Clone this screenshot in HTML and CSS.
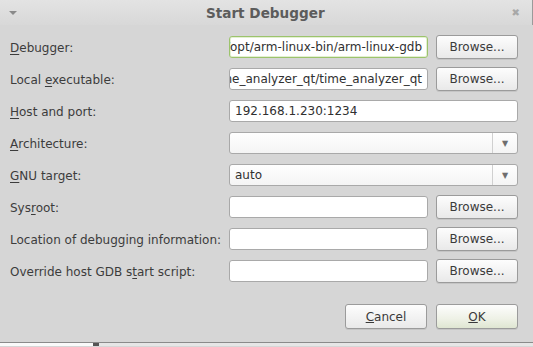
FILE: index.html
```html
<!DOCTYPE html>
<html lang="en">
<head>
    <meta charset="UTF-8">
    <title>Start Debugger</title>
    <link rel="stylesheet" href="styles.css">
</head>
<body>
    <div class="window">
        <div class="titlebar">
            <span class="menu-arrow"></span>
            <span class="title">Start Debugger</span>
            <span class="close">&#x2716;</span>
        </div>

        <div class="content">
            <div class="form">
                <label class="label"><u>D</u>ebugger:</label>
                <div class="field focused"><span class="scroll">/opt/arm-linux-bin/arm-linux-gdb</span></div>
                <button class="btn">Browse...</button>

                <label class="label">Local <u>e</u>xecutable:</label>
                <div class="field"><span class="scroll">/home/user/time_analyzer_qt/time_analyzer_qt</span></div>
                <button class="btn">Browse...</button>

                <label class="label"><u>H</u>ost and port:</label>
                <div class="field wide">192.168.1.230:1234</div>

                <label class="label"><u>A</u>rchitecture:</label>
                <div class="combo wide"><span class="combo-text"></span><span class="combo-arrow">&#x25BC;</span></div>

                <label class="label"><u>G</u>NU target:</label>
                <div class="combo wide"><span class="combo-text">auto</span><span class="combo-arrow">&#x25BC;</span></div>

                <label class="label">Sys<u>r</u>oot:</label>
                <div class="field"></div>
                <button class="btn">Browse...</button>

                <label class="label">Location of debugging information:</label>
                <div class="field"></div>
                <button class="btn">Browse...</button>

                <label class="label">Override host GDB s<u>t</u>art script:</label>
                <div class="field"></div>
                <button class="btn">Browse...</button>
            </div>

            <div class="buttons">
                <button class="btn"><u>C</u>ancel</button>
                <button class="btn default"><u>O</u>K</button>
            </div>
        </div>
    </div>
    <div class="under">
        <span class="under-white"></span>
        <span class="under-dark"></span>
    </div>
</body>
</html>
```

FILE: styles.css
```css
body {
    margin: 0;
    width: 533px;
    height: 347px;
    overflow: hidden;
    background-color: #d6d6d6;
    font-family: "DejaVu Sans", sans-serif;
    font-size: 12px;
    color: #3c3c3c;
}

.window {
    height: 343px;
    border-bottom: 1px solid #8a8a8a;
    box-sizing: border-box;
    background-color: #d6d6d6;
}

.titlebar {
    height: 25px;
    display: flex;
    align-items: center;
    justify-content: space-between;
    padding: 0 12px 0 9px;
    background: linear-gradient(#e3e3e3, #d8d8d8);
    border-right: 1px solid #9a9a9a;
}

.menu-arrow {
    width: 0;
    height: 0;
    border-left: 4px solid transparent;
    border-right: 4px solid transparent;
    border-top: 4px solid #8a8a8a;
    margin-top: 1px;
}

.title {
    font-weight: bold;
    font-size: 13.6px;
    color: #5c5c5c;
    margin-left: 2px;
}

.close {
    font-size: 10px;
    color: #a8a8a8;
}

.content {
    padding: 10px 15px 0 10px;
}

.form {
    display: grid;
    grid-template-columns: 211px 199px 82px;
    grid-auto-rows: 24px;
    column-gap: 8px;
    row-gap: 8px;
    align-items: center;
}

.label {
    white-space: nowrap;
    padding-top: 1px;
}

.label u {
    text-underline-offset: 2px;
}

.field,
.combo {
    height: 22px;
    box-sizing: border-box;
    background-color: #fff;
    border: 1px solid #a9a9a9;
    border-radius: 3px;
    padding: 0 5px;
    display: flex;
    align-items: center;
    white-space: nowrap;
    overflow: hidden;
    color: #303030;
    font-size: 12px;
}

.field.focused {
    border-color: #9cc36c;
    box-shadow: inset 0 0 0 1px #e3f0d2;
}

.field .scroll {
    display: flex;
    justify-content: flex-end;
    width: 100%;
    margin-right: -2px;
}

.wide {
    grid-column: span 2;
}

.combo {
    padding: 0 0 0 5px;
    background: linear-gradient(#fefefe, #f4f4f4);
}

.combo-text {
    flex: 1;
}

.combo-arrow {
    width: 24px;
    height: 20px;
    border-left: 1px solid #d0d0d0;
    display: flex;
    align-items: center;
    justify-content: center;
    font-size: 8px;
    color: #6e6e6e;
}

.btn {
    height: 24px;
    width: 82px;
    border: 1px solid #9b9b9b;
    border-radius: 3px;
    background: linear-gradient(#fdfdfd, #e9e9e9);
    box-shadow: 0 1px 0 rgba(0, 0, 0, 0.08);
    font-family: "DejaVu Sans", sans-serif;
    font-size: 12px;
    color: #3a3a3a;
    padding: 0;
}

.btn.default {
    background: linear-gradient(#fdfdfd, #eef1e6 60%, #dfe6d2);
}

.buttons {
    display: flex;
    justify-content: flex-end;
    gap: 9px;
    margin-top: 21px;
}

.buttons .btn {
    height: 25px;
}

.under {
    display: flex;
    height: 3px;
    background-color: #e6e6e6;
}

.under-white {
    width: 93px;
    background-color: #fafafa;
}

.under-dark {
    width: 6px;
    background-color: #555;
    margin-right: 10px;
}
```
